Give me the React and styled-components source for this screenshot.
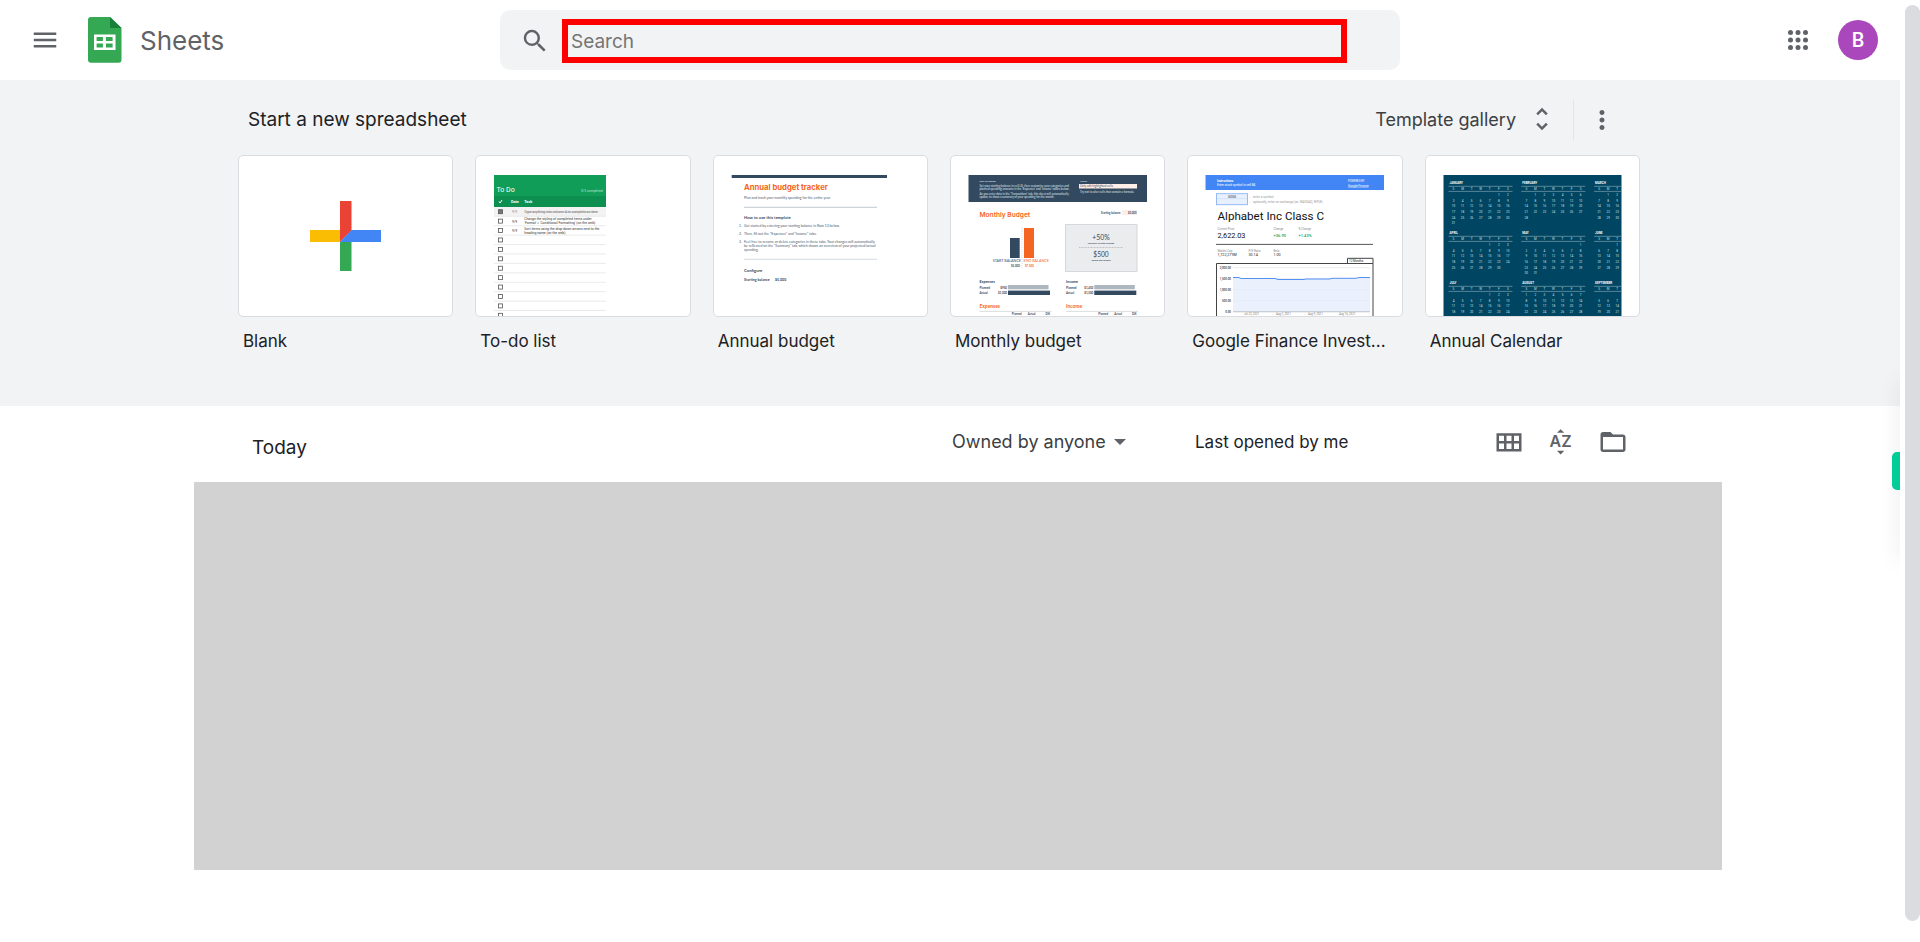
import React, { useState } from "react"
import styled, { createGlobalStyle } from 'styled-components';
import { MdMenu, MdSearch, MdUnfoldMore, MdMoreVert, MdFolderOpen } from 'react-icons/md';

const GlobalStyle = createGlobalStyle`
    * {
        box-sizing: border-box;
    }
    body {
        margin: 0;
        background: #fff;
        color: #202124;
        font-family: Inter, Roboto, "Liberation Sans", sans-serif;
        font-size: 17px;
        line-height: 24px;
    }
`;

const Page = styled.div`
    display: flex;
    min-height: 100vh;
`;

const Content = styled.div`
    position: relative;
    flex: 1;
    min-width: 0;
    overflow: hidden;
`;

const ScrollTrack = styled.div`
    display: flex;
    width: 20px;
    padding: 5px 0 21px 5px;
`;

const ScrollThumb = styled.div`
    flex: 1;
    border-radius: 8px;
    background: #dadce0;
`;

const Header = styled.header`
    display: grid;
    grid-template-columns: 500px minmax(0, 900px) 1fr;
    align-items: center;
    height: 80px;
`;

const Brand = styled.div`
    display: flex;
    align-items: center;
    padding-left: 30px;
`;

const Account = styled.div`
    display: flex;
    align-items: center;
    justify-content: flex-end;
    gap: 25px;
    padding-right: 22px;
`;

const IconButton = styled.button`
    display: flex;
    padding: 0;
    border: 0;
    background: none;
    color: #5f6368;
    cursor: pointer;
    svg {
        width: 30px;
        height: 30px;
    }
`;

const BrandLink = styled.a`
    display: flex;
    align-items: center;
    gap: 10px;
    margin-left: 20px;
    color: #5f6368;
    font-size: 26px;
    line-height: 32px;
    text-decoration: none;
`;

const BrandName = styled.span`
    padding-top: 2px;
`;

const Avatar = styled.button`
    width: 40px;
    height: 40px;
    padding: 0;
    border: 0;
    border-radius: 50%;
    background: #ab47bc;
    color: #fff;
    font-family: Roboto, sans-serif;
    font-size: 20px;
    font-weight: 500;
    cursor: pointer;
`;

const SearchBox = styled.form`
    display: flex;
    align-items: center;
    gap: 12px;
    height: 60px;
    padding: 2px 53px 0 20px;
    border-radius: 10px;
    background: #f1f3f4;
`;

const SearchInput = styled.input`
    flex: 1;
    min-width: 0;
    height: 44px;
    padding: 0 3px;
    border: 6px solid #f00;
    background: transparent;
    color: #202124;
    font-family: inherit;
    font-size: 19px;
    outline: none;
    &::placeholder {
        color: #757575;
    }
`;

const Gallery = styled.section`
    padding: 20px 22px 53px 0;
    background: #f1f3f4;
`;

const Wrapper = styled.div`
    width: 100%;
    max-width: 1402px;
    margin: 0 auto;
`;

const GalleryBar = styled.div`
    display: flex;
    align-items: center;
    height: 40px;
    margin-bottom: 15px;
    padding: 0 23px 0 10px;
`;

const GalleryTitle = styled.h2`
    flex: 1;
    margin: 0;
    font-size: 19px;
    font-weight: 400;
`;

const GalleryButton = styled.button`
    display: flex;
    align-items: center;
    gap: 11px;
    padding: 0 0 2px;
    border: 0;
    background: none;
    color: #3c4043;
    font-family: inherit;
    font-size: 18px;
    cursor: pointer;
    svg {
        width: 30px;
        height: 30px;
        color: #5f6368;
    }
`;

const Divider = styled.div`
    width: 1px;
    height: 40px;
    margin: 0 13px 0 16px;
    background: #e3e5e8;
`;

const Cards = styled.div`
    display: grid;
    grid-template-columns: repeat(6, minmax(0, 1fr));
    gap: 22px;
`;

const Card = styled.a`
    color: #202124;
    text-decoration: none;
`;

const Thumb = styled.div`
    height: 162px;
    border: 1px solid #dadce0;
    border-radius: 5px;
    background: #fff;
    overflow: hidden;
    svg {
        display: block;
    }
`;

const CardLabel = styled.div`
    margin-top: 12px;
    padding: 0 5px;
    overflow: hidden;
    text-overflow: ellipsis;
    white-space: nowrap;
`;

const Recent = styled.section`
    padding-right: 22px;
`;

const RecentBar = styled.div`
    display: grid;
    grid-template-columns: 1fr 243px 299px 134px;
    align-items: center;
    height: 76px;
    padding: 0 12px 4px 14px;
`;

const RecentTitle = styled.h2`
    margin: 0;
    padding-top: 12px;
    font-size: 19px;
    font-weight: 400;
`;

const OwnerFilter = styled.label`
    display: flex;
    align-items: center;
    gap: 8px;
`;

const OwnerSelect = styled.select`
    appearance: none;
    margin: 0;
    padding: 0;
    border: 0;
    background: none;
    color: #3c4043;
    font-family: inherit;
    font-size: 18px;
    line-height: 24px;
    cursor: pointer;
`;

const Tools = styled.div`
    display: flex;
    gap: 22px;
`;

const DocsArea = styled.div`
    padding-left: 16px;
`;

const Docs = styled.div`
    max-width: 1528px;
    height: 388px;
    margin: 0 auto;
    background: #d2d2d2;
`;

const SidePanel = styled.div`
    position: absolute;
    top: 380px;
    left: 100%;
    width: 20px;
    height: 180px;
    box-shadow: 0 0 24px rgba(0, 0, 0, 0.08);
`;

const SideTab = styled.button`
    position: absolute;
    top: 452px;
    right: 0;
    width: 8px;
    height: 38px;
    padding: 0;
    border: 0;
    border-radius: 5px 0 0 5px;
    background: #00cd98;
`;

function SheetsLogo() {
    return (
        <svg width="50" height="50" viewBox="0 0 50 50" aria-hidden="true">
            <path d="M11 2h19l11.500 11v31.700a3 3 0 0 1-3 3H11a3 3 0 0 1-3-3V5a3 3 0 0 1 3-3z" fill="#34a853" />
            <path d="M30 2l11.500 11H30z" fill="#188038" />
            <path d="M14 19.500h21.500v15.500H14zM16.600 22.100v4h6.300v-4zM25.900 22.100v4h6.700v-4zM16.600 28.600v4h6.300v-4zM25.900 28.600v4h6.700v-4z" fill="#fff" fillRule="evenodd" />
        </svg>
    );
}

function AppsIcon() {
    return (
        <svg viewBox="0 0 24 24" fill="currentColor" aria-hidden="true">
            {[6, 12, 18].map((y) => [6, 12, 18].map((x) => <circle key={x + '-' + y} cx={x} cy={y} r="2" />))}
        </svg>
    );
}

function GridIcon() {
    return (
        <svg viewBox="0 0 24 24" fill="none" stroke="currentColor" strokeWidth="2" aria-hidden="true">
            <path d="M3 6h18v12.500H3zM3 12.200h18M9 6v12.500M15 6v12.500" />
        </svg>
    );
}

function SortIcon() {
    return (
        <svg viewBox="0 0 24 24" fill="currentColor" aria-hidden="true">
            <path d="M8.800 4.600h5.800L11.700 1.700zM8.800 19h5.800l-2.900 2.900z" />
            <text x="11.700" y="16.200" fontFamily="Inter, sans-serif" fontSize="12.800" fontWeight="600" textAnchor="middle">AZ</text>
        </svg>
    );
}

// common canvas of the template previews
function Preview({ children, family = 'Roboto' }) {
    return (
        <svg width="213" height="160" viewBox="0 0 213 160" fontFamily={family + ', sans-serif'} aria-hidden="true">
            {children}
        </svg>
    );
}

function BlankPreview() {
    return (
        <Preview>
            <path d="M101 45h11.500v29.500L101 86z" fill="#ea4335" />
            <path d="M71 74h30v12H71z" fill="#fbbc04" />
            <path d="M101 86h11.500v29H101z" fill="#34a853" />
            <path d="M112.500 74H142v12h-41z" fill="#4285f4" />
        </Preview>
    );
}

function TodoPreview() {
    const rows = [0, 1, 2, 3, 4, 5, 6, 7, 8, 9, 10, 11];
    return (
        <Preview>
            <rect x="18" y="19" width="112" height="21" fill="#0f9d58" />
            <rect x="18" y="40" width="112" height="11" fill="#0c8f4f" />
            <rect x="18" y="51" width="112" height="9" fill="#f3f3f3" />
            <text x="20.500" y="35.700" fontSize="7" fill="#fff">To Do</text>
            <text x="127" y="36" fontSize="3.400" fill="#b7e1cd" textAnchor="end">0/3 completed</text>
            <path d="M23 45.500l1 1.500 2-3" stroke="#fff" strokeWidth="1" fill="none" />
            <g fontSize="3.800" fontWeight="700" fill="#fff">
                <text x="35" y="47">Date</text>
                <text x="48.300" y="47">Task</text>
            </g>
            {rows.map((i) => (
                <g key={i}>
                    <rect x="22.500" y={53.700 + i * 9.420} width="4" height="4" fill={i === 0 ? '#777' : '#fff'} stroke="#555" strokeWidth="0.800" />
                    <path d={`M18 ${60.300 + i * 9.420}h112`} stroke="#e4e4e4" strokeWidth="0.800" />
                </g>
            ))}
            <g fontSize="3.400" fill="#333">
                <text x="36" y="57" fill="#888">9/9</text>
                <text x="36" y="66.500">9/9</text>
                <text x="36" y="76">9/9</text>
                <text x="48.300" y="57" fill="#777" textDecoration="line-through">Type anything into column A to complete an item</text>
                <text x="48.300" y="64.200">Change the styling of completed items under</text>
                <text x="48.300" y="68.200">'Format' &gt; 'Conditional Formatting' (on the web)</text>
                <text x="48.300" y="73.700">Sort items using the drop-down arrows next to the</text>
                <text x="48.300" y="77.500">heading name (on the web)</text>
            </g>
        </Preview>
    );
}

function AnnualPreview() {
    return (
        <Preview family="Lato">
            <rect x="17.700" y="19" width="155.300" height="3" fill="#334960" />
            <text x="30" y="34.300" fontFamily="Inter, sans-serif" fontSize="7.700" fontWeight="700" fill="#f46524">Annual budget tracker</text>
            <path d="M30 51.300h133" stroke="#a3b0bd" strokeWidth="0.700" />
            <path d="M30 103.300h133" stroke="#c3ccd6" strokeWidth="0.700" />
            <g fontSize="3.500" fill="#4b5c6e">
                <text x="30" y="42.700">Plan and track your monthly spending for the entire year.</text>
                <text x="25" y="70.700">1.</text>
                <text x="30" y="70.700">Get started by entering your starting balance in Row 13 below.</text>
                <text x="25" y="78.700">2.</text>
                <text x="30" y="78.700">Then, fill out the "Expenses" and "Income" tabs.</text>
                <text x="25" y="86.700">3.</text>
                <text x="30" y="86.700">Feel free to rename or delete categories in these tabs. Your changes will automatically</text>
                <text x="30" y="91">be reflected on the "Summary" tab, which shows an overview of your projected/actual</text>
                <text x="30" y="95">spending.</text>
            </g>
            <g fontWeight="700" fill="#334960">
                <text x="30" y="62.700" fontSize="4.200">How to use this template</text>
                <text x="30" y="116" fontSize="4.200">Configure</text>
                <text x="30" y="125" fontSize="3.600">Starting balance</text>
                <text x="61" y="125" fontSize="3.600">$5,000</text>
            </g>
        </Preview>
    );
}

function MonthlyPreview() {
    return (
        <Preview family="Lato">
            <rect x="17.500" y="19" width="178.500" height="27" fill="#334960" />
            <rect x="128" y="28" width="58" height="4.500" fill="#fdeee8" />
            <g fontSize="2.900" fill="#dfe5eb">
                <text x="28.500" y="25.500" fontSize="2.500" fontWeight="700">GET STARTED</text>
                <text x="28.500" y="31">Set your starting balance in cell L8, then customise your categories and</text>
                <text x="28.500" y="34">planned spending amounts in the 'Expenses' and 'Income' tables below.</text>
                <text x="28.500" y="38.500">As you enter data in the 'Transactions' tab, this sheet will automatically</text>
                <text x="28.500" y="41.500">update to show a summary of your spending for the month.</text>
                <text x="129" y="25.500" fontSize="2.500" fontWeight="700">NOTE</text>
                <text x="129" y="31.300" fill="#334960">Only edit highlighted cells.</text>
                <text x="129" y="37.300">Try not to alter cells that contain a formula.</text>
            </g>
            <text x="28.500" y="61" fontFamily="Inter, sans-serif" fontSize="6.600" fontWeight="600" fill="#f46524">Monthly Budget</text>
            <rect x="171" y="54" width="15" height="5" fill="#fdeee8" />
            <g fontSize="2.700" fontWeight="700" fill="#334960">
                <text x="170" y="57.500" textAnchor="end">Starting balance:</text>
                <text x="185.500" y="57.500" textAnchor="end">$5,000</text>
            </g>
            <rect x="59" y="82" width="9.700" height="20" fill="#334960" />
            <rect x="73" y="72" width="10" height="30" fill="#f46524" />
            <path d="M71 71v42" stroke="#ccc" strokeWidth="0.700" strokeDasharray="1 1" />
            <g fontSize="3.700">
                <text x="70" y="106" textAnchor="end" fill="#334960">START BALANCE</text>
                <text x="72.500" y="106" fill="#f46524">END BALANCE</text>
                <text x="60" y="110.800" fontSize="2.800" fontWeight="700" fill="#334960">$5,000</text>
                <text x="74" y="110.800" fontSize="2.800" fontWeight="700" fill="#f46524">$7,500</text>
            </g>
            <rect x="114.500" y="68.500" width="71.500" height="47" fill="#ebecee" stroke="#d5d7da" />
            <g fill="#334960" textAnchor="middle">
                <text x="150" y="83.500" fontSize="6.800">+50%</text>
                <text x="150" y="88.300" fontSize="2.500" fontWeight="700">Increase in total savings</text>
                <text x="150" y="100.500" fontSize="6.600">$500</text>
                <text x="150" y="105.200" fontSize="2.500" fontWeight="700">Saved this month</text>
            </g>
            <path d="M128 91.500h44" stroke="#8f98a2" strokeWidth="0.500" strokeDasharray="1 0.500" />
            {[['Expenses', 28.5, 57, '$950', '$1,000'], ['Income', 115, 143.3, '$1,450', '$1,500']].map(([name, x, bar, planned, actual]) => (
                <g key={name}>
                    <g fontSize="2.900" fontWeight="700" fill="#334960">
                        <text x={x} y="127" fontSize="3.700">{name}</text>
                        <text x={x} y="132.500">Planned</text>
                        <text x={x} y="138">Actual</text>
                        <text x={bar - 1} y="132.500" textAnchor="end">{planned}</text>
                        <text x={bar - 1} y="138" textAnchor="end">{actual}</text>
                    </g>
                    <rect x={bar} y="129" width="40.500" height="4.300" fill="#aeb6bf" />
                    <rect x={bar} y="134.600" width="42" height="4.400" fill="#334960" />
                    <text x={x} y="152.200" fontSize="4.900" fontWeight="700" fill="#f46524">{name}</text>
                    <path d={`M${x} 155.400h72`} stroke="#ccd1d6" strokeWidth="0.700" />
                    <g fontSize="2.700" fontWeight="700" fill="#334960" textAnchor="end">
                        <text x={x + 42} y="159">Planned</text>
                        <text x={x + 56} y="159">Actual</text>
                        <text x={x + 71} y="159">Diff.</text>
                    </g>
                </g>
            ))}
        </Preview>
    );
}

function FinancePreview() {
    const labels = ['2,000.00', '1,500.00', '1,000.00', '500.00', '0.00'];
    return (
        <Preview>
            <rect x="17.500" y="19" width="178.500" height="15" fill="#4285f4" />
            <g fontSize="3" fill="#fff">
                <text x="29" y="25.600" fontWeight="700">Instructions</text>
                <text x="29" y="29.500">Enter stock symbol in cell B4</text>
                <text x="160" y="25.600" fontSize="2.700">POWERED BY</text>
                <text x="160" y="30.600" textDecoration="underline">Google Finance</text>
            </g>
            <rect x="28.500" y="37.700" width="31" height="11" fill="#e8f0fe" stroke="#8ab4f8" strokeWidth="0.900" />
            <path d="M29 42.600h30" stroke="#c6dafc" strokeWidth="0.600" />
            <text x="44" y="41.700" fontSize="3" textAnchor="middle" fill="#333">GOOG</text>
            <g fontSize="3.150" fill="#999">
                <text x="61" y="41.700">← enter a symbol</text>
                <text x="61" y="47">← optionally, enter an exchange (ex: NASDAQ, NYSE)</text>
            </g>
            <text x="29.500" y="64" fontSize="11.600" fill="#111">Alphabet Inc Class C</text>
            <g fontSize="2.900" fill="#888">
                <text x="29.500" y="73.500">Current Price</text>
                <text x="85.500" y="73.500">Change</text>
                <text x="110.500" y="73.500">% Change</text>
                <text x="29.500" y="95.500">Market Cap</text>
                <text x="60.500" y="95.500">P/E Ratio</text>
                <text x="85.500" y="95.500">Beta</text>
            </g>
            <text x="29.500" y="82" fontSize="7.300" fill="#111">2,622.03</text>
            <text x="85.500" y="81" fontSize="4" fontWeight="500" fill="#0f9d58">+36.95</text>
            <text x="110.500" y="81" fontSize="4" fontWeight="500" fill="#0f9d58">+1.43%</text>
            <path d="M28 88.400h157" stroke="#444" strokeWidth="0.900" />
            <g fontSize="3.700" fill="#222">
                <text x="29.500" y="100">1,722,279M</text>
                <text x="60.500" y="100">30.14</text>
                <text x="85.500" y="100">1.00</text>
            </g>
            <path d="M28.500 160v-52.500H185V160M159.500 107.500v-5.200H185v5.200" stroke="#444" strokeWidth="1" fill="none" />
            <text x="161" y="106" fontSize="3" fill="#222">12 Months</text>
            {labels.map((label, i) => (
                <g key={label}>
                    <path d={`M45 ${111.700 + i * 11}h137`} stroke={i === 4 ? '#888' : '#e2e4e8'} strokeWidth="0.700" />
                    <text x="43" y={112.700 + i * 11} fontSize="2.900" fontWeight="500" textAnchor="end" fill="#333">{label}</text>
                </g>
            ))}
            <path d="M45 121.500h6l2 1h34l3 1h26l2-.5h24l2-.7h24l3-.8h11V155.500H45z" fill="#e3ecfc" fillOpacity="0.750" />
            <path d="M45 121.500h6l2 1h34l3 1h26l2-.5h24l2-.7h24l3-.8h11" stroke="#4285f4" strokeWidth="0.900" fill="none" />
            <g fontSize="2.800" fill="#777">
                <text x="56" y="159.300">Jul 23, 2021</text>
                <text x="88" y="159.300">Aug 2, 2021</text>
                <text x="120" y="159.300">Aug 9, 2021</text>
                <text x="151" y="159.300">Aug 16, 2021</text>
            </g>
        </Preview>
    );
}

// [name, weekday of the first, number of days]
const months = [
    ['JANUARY', 5, 31], ['FEBRUARY', 1, 28], ['MARCH', 1, 31],
    ['APRIL', 4, 30], ['MAY', 6, 31], ['JUNE', 2, 30],
    ['JULY', 4, 31], ['AUGUST', 0, 31], ['SEPTEMBER', 3, 30],
];

function CalendarPreview() {
    return (
        <Preview>
            <rect x="17.500" y="19" width="178" height="141" fill="#004561" />
            {months.map(([name, start, days], m) => {
                const x = 23.5 + (m % 3) * 72.8;
                const y = 28 + Math.floor(m / 3) * 50;
                const cols = m % 3 === 2 ? 3 : 7; //the sheet ends in the middle of the third month
                const line = m % 3 === 2 ? 27 : 64;
                const cells = Array.from({ length: days }, (_, i) => ({
                    day: i + 1,
                    col: (i + start) % 7,
                    top: y + 12.3 + Math.floor((i + start) / 7) * 5.55,
                })).filter((c) => c.col < cols && c.top < 160);
                return (
                    <g key={name} fill="#d5e2e8" fontSize="3" textAnchor="middle">
                        <text x={x} y={y} fontWeight="700" textAnchor="start" fill="#fff">{name}</text>
                        <path d={`M${x - 1} ${y + 2.300}h${line}M${x - 1} ${y + 7.400}h${line}`} stroke="#8fb0bd" strokeWidth="0.600" />
                        {['S', 'M', 'T', 'W', 'T', 'F', 'S'].slice(0, cols).map((d, i) => (
                            <text key={i} x={x + 4 + i * 9.050} y={y + 5.900}>{d}</text>
                        ))}
                        {cells.map((c) => (
                            <text key={c.day} x={x + 4 + c.col * 9.050} y={c.top}>{c.day}</text>
                        ))}
                    </g>
                );
            })}
        </Preview>
    );
}

const templates = [
    { name: 'Blank', preview: <BlankPreview /> },
    { name: 'To-do list', preview: <TodoPreview /> },
    { name: 'Annual budget', preview: <AnnualPreview /> },
    { name: 'Monthly budget', preview: <MonthlyPreview /> },
    { name: 'Google Finance Invest...', preview: <FinancePreview /> },
    { name: 'Annual Calendar', preview: <CalendarPreview /> },
];

export default function App() {
    const [search, setSearch] = useState('');
    const [owner, setOwner] = useState('anyone');

    return (
        <Page>
            <GlobalStyle />
            <Content>
                <Header>
                    <Brand>
                        <IconButton type="button" aria-label="Main menu"><MdMenu /></IconButton>
                        <BrandLink href="#home">
                            <SheetsLogo />
                            <BrandName>Sheets</BrandName>
                        </BrandLink>
                    </Brand>
                    <SearchBox role="search" onSubmit={(e) => e.preventDefault()}>
                        <IconButton type="submit" aria-label="Search"><MdSearch /></IconButton>
                        <SearchInput
                            type="text"
                            aria-label="Search"
                            placeholder="Search"
                            value={search}
                            onChange={(e) => setSearch(e.target.value)}
                        />
                    </SearchBox>
                    <Account>
                        <IconButton type="button" aria-label="Apps"><AppsIcon /></IconButton>
                        <Avatar type="button">B</Avatar>
                    </Account>
                </Header>

                <Gallery>
                    <Wrapper>
                        <GalleryBar>
                            <GalleryTitle>Start a new spreadsheet</GalleryTitle>
                            <GalleryButton type="button">
                                Template gallery
                                <MdUnfoldMore />
                            </GalleryButton>
                            <Divider />
                            <IconButton type="button" aria-label="More"><MdMoreVert /></IconButton>
                        </GalleryBar>
                        <Cards>
                            {templates.map(({ name, preview }) => (
                                <Card key={name} href="#create">
                                    <Thumb>{preview}</Thumb>
                                    <CardLabel>{name}</CardLabel>
                                </Card>
                            ))}
                        </Cards>
                    </Wrapper>
                </Gallery>

                <Recent>
                    <Wrapper>
                        <RecentBar>
                            <RecentTitle>Today</RecentTitle>
                            <OwnerFilter>
                                <OwnerSelect aria-label="Owner" value={owner} onChange={(e) => setOwner(e.target.value)}>
                                    <option value="anyone">Owned by anyone</option>
                                </OwnerSelect>
                                <svg width="12" height="6" viewBox="0 0 12 6" fill="#5f6368" aria-hidden="true">
                                    <path d="M0 0h12L6 6z" />
                                </svg>
                            </OwnerFilter>
                            <div>Last opened by me</div>
                            <Tools>
                                <IconButton type="button" aria-label="Grid view"><GridIcon /></IconButton>
                                <IconButton type="button" aria-label="Sort options"><SortIcon /></IconButton>
                                <IconButton type="button" aria-label="Open file picker"><MdFolderOpen /></IconButton>
                            </Tools>
                        </RecentBar>
                    </Wrapper>
                </Recent>
                <DocsArea>
                    <Docs />
                </DocsArea>

                <SidePanel />
                <SideTab type="button" aria-label="Open side panel" />
            </Content>
            <ScrollTrack>
                <ScrollThumb />
            </ScrollTrack>
        </Page>
    );
}
